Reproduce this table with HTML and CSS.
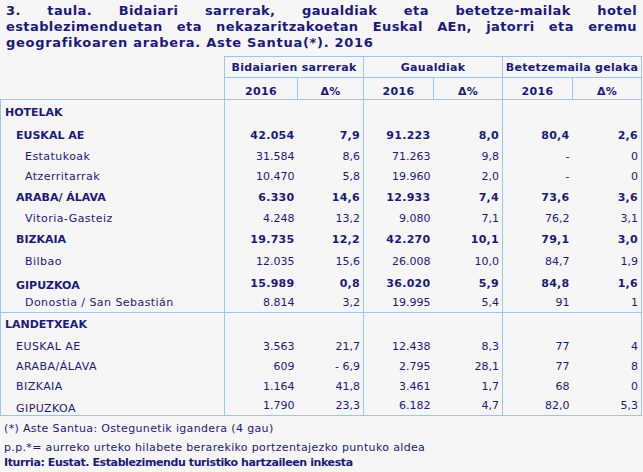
FILE: index.html
```html
<!DOCTYPE html>
<html lang="eu">
<head>
<meta charset="utf-8">
<title>3. taula</title>
<link rel="stylesheet" href="styles.css">
</head>
<body>
<div class="page">
  <h1 class="title">
    <span class="tline just">3. taula. Bidaiari sarrerak, gaualdiak eta betetze-mailak hotel</span>
    <span class="tline just">establezimenduetan eta nekazaritzakoetan Euskal AEn, jatorri eta eremu</span>
    <span class="tline">geografikoaren arabera. Aste Santua(*). 2016</span>
  </h1>
  <table class="data">
    <colgroup>
      <col class="c-label"><col class="c-a"><col class="c-b"><col class="c-c"><col class="c-d"><col class="c-e"><col class="c-f">
    </colgroup>
    <thead>
      <tr class="hr1">
        <th class="blank"></th>
        <th colspan="2" class="grp">Bidaiarien sarrerak</th>
        <th colspan="2" class="grp">Gaualdiak</th>
        <th colspan="2" class="grp">Betetzemaila gelaka</th>
      </tr>
      <tr class="hr2">
        <th class="blank2"></th>
        <th class="sub">2016</th><th class="sub">&Delta;%</th>
        <th class="sub">2016</th><th class="sub">&Delta;%</th>
        <th class="sub">2016</th><th class="sub">&Delta;%</th>
      </tr>
    </thead>
    <tbody class="sec">
      <tr class="r25"><td class="lbl sect">HOTELAK</td><td></td><td class="gr"></td><td></td><td class="gr"></td><td></td><td class="gr"></td></tr>
      <tr class="r22 b"><td class="lbl l1">EUSKAL AE</td><td>42.054</td><td class="gr">7,9</td><td>91.223</td><td class="gr">8,0</td><td>80,4</td><td class="gr">2,6</td></tr>
      <tr class="r20"><td class="lbl l2">Estatukoak</td><td>31.584</td><td class="gr">8,6</td><td>71.263</td><td class="gr">9,8</td><td>-</td><td class="gr">0</td></tr>
      <tr class="r20"><td class="lbl l2">Atzerritarrak</td><td>10.470</td><td class="gr">5,8</td><td>19.960</td><td class="gr">2,0</td><td>-</td><td class="gr">0</td></tr>
      <tr class="r21 b"><td class="lbl l1">ARABA/ ÁLAVA</td><td>6.330</td><td class="gr">14,6</td><td>12.933</td><td class="gr">7,4</td><td>73,6</td><td class="gr">3,6</td></tr>
      <tr class="r21"><td class="lbl l2">Vitoria-Gasteiz</td><td>4.248</td><td class="gr">13,2</td><td>9.080</td><td class="gr">7,1</td><td>76,2</td><td class="gr">3,1</td></tr>
      <tr class="r22 b"><td class="lbl l1">BIZKAIA</td><td>19.735</td><td class="gr">12,2</td><td>42.270</td><td class="gr">10,1</td><td>79,1</td><td class="gr">3,0</td></tr>
      <tr class="r22"><td class="lbl l2">Bilbao</td><td>12.035</td><td class="gr">15,6</td><td>26.008</td><td class="gr">10,0</td><td>84,7</td><td class="gr">1,9</td></tr>
      <tr class="r21 b"><td class="lbl l1 low">GIPUZKOA</td><td>15.989</td><td class="gr">0,8</td><td>36.020</td><td class="gr">5,9</td><td>84,8</td><td class="gr">1,6</td></tr>
      <tr class="r19"><td class="lbl l2">Donostia / San Sebastián</td><td>8.814</td><td class="gr">3,2</td><td>19.995</td><td class="gr">5,4</td><td>91</td><td class="gr">1</td></tr>
    </tbody>
    <tbody class="sec">
      <tr class="r23"><td class="lbl sect">LANDETXEAK</td><td></td><td class="gr"></td><td></td><td class="gr"></td><td></td><td class="gr"></td></tr>
      <tr class="r21"><td class="lbl l1">EUSKAL AE</td><td>3.563</td><td class="gr">21,7</td><td>12.438</td><td class="gr">8,3</td><td>77</td><td class="gr">4</td></tr>
      <tr class="r20"><td class="lbl l1">ARABA/ÁLAVA</td><td>609</td><td class="gr">- 6,9</td><td>2.795</td><td class="gr">28,1</td><td>77</td><td class="gr">8</td></tr>
      <tr class="r20"><td class="lbl l1">BIZKAIA</td><td>1.164</td><td class="gr">41,8</td><td>3.461</td><td class="gr">1,7</td><td>68</td><td class="gr">0</td></tr>
      <tr class="r19"><td class="lbl l1 low">GIPUZKOA</td><td>1.790</td><td class="gr">23,3</td><td>6.182</td><td class="gr">4,7</td><td>82,0</td><td class="gr">5,3</td></tr>
    </tbody>
  </table>
  <div class="notes">
    <p class="note n1">(*) Aste Santua: Ostegunetik igandera (4 gau)</p>
    <p class="note n2">p.p.*= aurreko urteko hilabete berarekiko portzentajezko puntuko aldea</p>
    <p class="note n3 src">Iturria: Eustat. Establezimendu turistiko hartzaileen inkesta</p>
  </div>
</div>
</body>
</html>
```

FILE: styles.css
```css
html, body {
  margin: 0;
  padding: 0;
  background: #f6f6f6;
}

body {
  font-family: "DejaVu Sans", Verdana, sans-serif;
  color: #1b1b7a;
  font-size: 11px;
}

.page {
  width: 643px;
}

.title {
  margin: 0;
  padding: 3px 6px 0 6px;
  font-size: 13px;
  font-weight: bold;
  line-height: 16px;
  letter-spacing: 0.7px;
}

.tline {
  display: block;
}

.tline.just {
  text-align: justify;
  text-align-last: justify;
  letter-spacing: 0.4px;
}

.data {
  margin-top: 5px;
  border-collapse: collapse;
  table-layout: fixed;
  width: 642px;
}

.c-label { width: 224px; }
.c-a { width: 73px; }
.c-b { width: 66px; }
.c-c { width: 70px; }
.c-d { width: 69px; }
.c-e { width: 70px; }
.c-f { width: 69px; }

.data th {
  font-weight: bold;
  border: 1px solid #9cc6f2;
  letter-spacing: 0.3px;
  padding: 0;
}

.data th.blank {
  border-top: none;
  border-left: none;
  border-bottom: none;
}

.data th.blank2 {
  border-top: none;
  border-left: none;
}

.hr1 { height: 21px; }
.hr1 th { vertical-align: middle; }

.hr2 { height: 22px; }
.hr2 th { vertical-align: bottom; padding-bottom: 1px; }

.sec {
  border: 1px solid #9cc6f2;
}

.data td {
  padding: 0 3px 0 0;
  text-align: right;
  vertical-align: middle;
  white-space: nowrap;
}

.data td.gr {
  border-right: 1px solid #9cc6f2;
}

.data td.lbl {
  text-align: left;
  border-right: 1px solid #9cc6f2;
  letter-spacing: 0.45px;
}

.b td { font-weight: bold; letter-spacing: 0.3px; }
.b td.lbl { letter-spacing: 0; }

.data td.sect {
  font-weight: bold;
  padding-left: 4px;
  letter-spacing: 0;
}

.data td.l1 { padding-left: 15px; }
.data td.l2 { padding-left: 24px; }
.data td.low { padding-top: 5px; }

.r19 { height: 19px; }
.r20 { height: 20px; }
.r21 { height: 21px; }
.r22 { height: 22px; }
.r23 { height: 23px; }
.r25 { height: 25px; }

.notes {
  padding-left: 4px;
}

.note {
  margin: 0;
  line-height: 19px;
  letter-spacing: 0.35px;
}

.n1 { margin-top: 3px; }
.n2 { line-height: 19px; }
.n3 { line-height: 12px; }

.src {
  font-weight: bold;
  letter-spacing: -0.4px;
}
```
